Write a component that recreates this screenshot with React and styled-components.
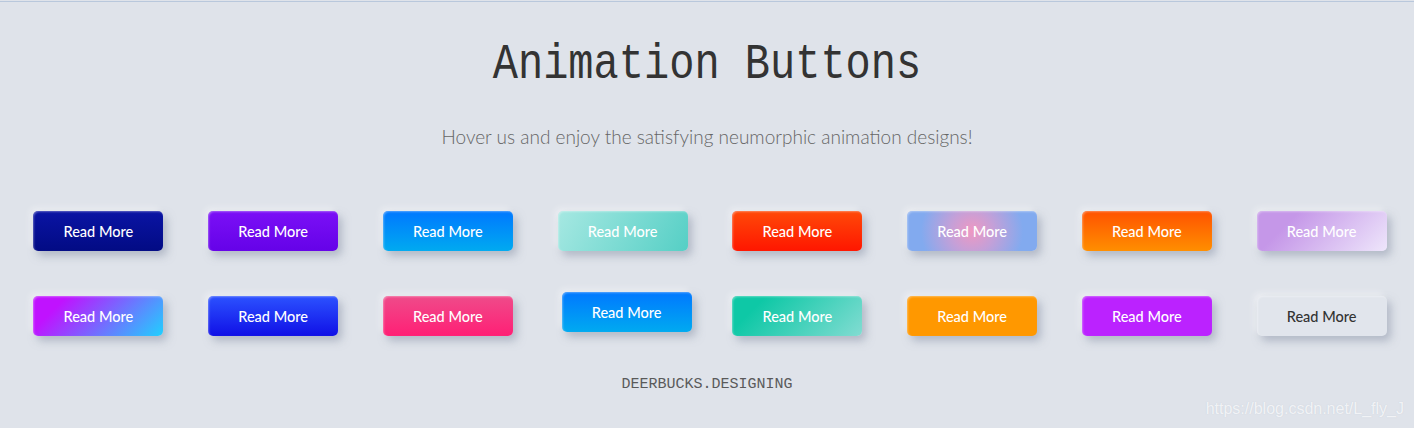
import styled, { createGlobalStyle, css } from 'styled-components'

const GlobalStyle = createGlobalStyle`
    html, body {
        margin: 0;
        background: #dfe3ea;
    }
    body {
        font-family: "Lato", "Liberation Sans", sans-serif;
    }
`

const Page = styled.div`
    position: relative;
    height: 428px;
    overflow: hidden;
    padding-top: 1px;
    box-sizing: border-box;
`

const TopRule = styled.div`
    height: 1px;
    background: #b9c8dc;
`

const Title = styled.h1`
    margin: 31px 0 0;
    text-align: center;
    font-family: "Liberation Mono", "DejaVu Sans Mono", monospace;
    font-weight: 400;
    font-size: 42px;
    line-height: 64px;
    color: #333;
    transform: scaleY(1.18);
`

const Subtitle = styled.p`
    margin: 28px 0 0;
    text-align: center;
    font-family: "Lato", "Open Sans", sans-serif;
    font-weight: 300;
    font-size: 19px;
    line-height: 24px;
    color: #666;
`

const Grid = styled.div`
    display: grid;
    grid-template-columns: repeat(8, 1fr);
    row-gap: 45px;
    justify-items: center;
    margin-top: 62px;
    padding: 0 5px 0 11px;
`

const Button = styled.button`
    width: 130px;
    height: 40px;
    border: none;
    border-radius: 5px;
    padding: 0;
    font-family: "Lato", "Liberation Sans", sans-serif;
    font-size: 14.5px;
    font-weight: 500;
    color: ${p => p.$dark ? '#333' : '#fff'};
    background: ${p => p.$bg};
    box-shadow:
        4px 5px 8px rgba(140, 150, 170, 0.55),
        -3px -3px 6px rgba(255, 255, 255, 0.45),
        inset 1px 1px 2px rgba(255, 255, 255, 0.35);
    cursor: pointer;
    ${p => p.$hovered && css`
        transform: translate(4px, -4px);
    `}
`

const Footer = styled.div`
    margin-top: 40px;
    text-align: center;
    font-family: "Liberation Mono", "DejaVu Sans Mono", monospace;
    font-size: 15px;
    color: #5a5a5a;
`

const Watermark = styled.span`
    position: absolute;
    right: 10px;
    bottom: 10px;
    font-family: "Liberation Sans", Arial, sans-serif;
    font-size: 16px;
    color: rgba(255, 255, 255, 0.75);
    text-shadow: 0 0 1px rgba(180, 190, 205, 0.6);
`

const buttons = [
    { bg: 'linear-gradient(#0a14a4, #020b84)' },
    { bg: 'linear-gradient(#7b10f6, #6502e8)' },
    { bg: 'linear-gradient(#0078ff, #00aaf0)' },
    { bg: 'linear-gradient(120deg, #a6e8e2, #55cfc5)' },
    { bg: 'linear-gradient(#ff4a08, #ff1600)' },
    { bg: 'radial-gradient(circle at center, #ee98c2 0%, #c4a0d8 32%, #82aaef 75%)' },
    { bg: 'linear-gradient(#ff5200, #ff8e00)' },
    { bg: 'linear-gradient(135deg, #c597e8 25%, #eee6fb)' },
    { bg: 'linear-gradient(135deg, #c012ff 20%, #20d0fe)' },
    { bg: 'linear-gradient(#2c52ff, #1010e6)' },
    { bg: 'linear-gradient(#ef4b8a, #ff1f75)' },
    { bg: 'linear-gradient(#0078ff, #00aaf0)', hovered: true },
    { bg: 'linear-gradient(135deg, #0ec8a6 20%, #82dcd2)' },
    { bg: '#ff9800' },
    { bg: '#bb22ff' },
    { bg: '#e1e5ec', dark: true },
]

const App = () => <Page>
    <GlobalStyle />
    <TopRule />
    <Title>Animation Buttons</Title>
    <Subtitle>Hover us and enjoy the satisfying neumorphic animation designs!</Subtitle>
    <Grid>
        {buttons.map((b, i) => (
            <Button key={i} $bg={b.bg} $dark={b.dark} $hovered={b.hovered}>Read More</Button>
        ))}
    </Grid>
    <Footer>DEERBUCKS.DESIGNING</Footer>
    <Watermark>https://blog.csdn.net/L_fly_J</Watermark>
</Page>

export default App
